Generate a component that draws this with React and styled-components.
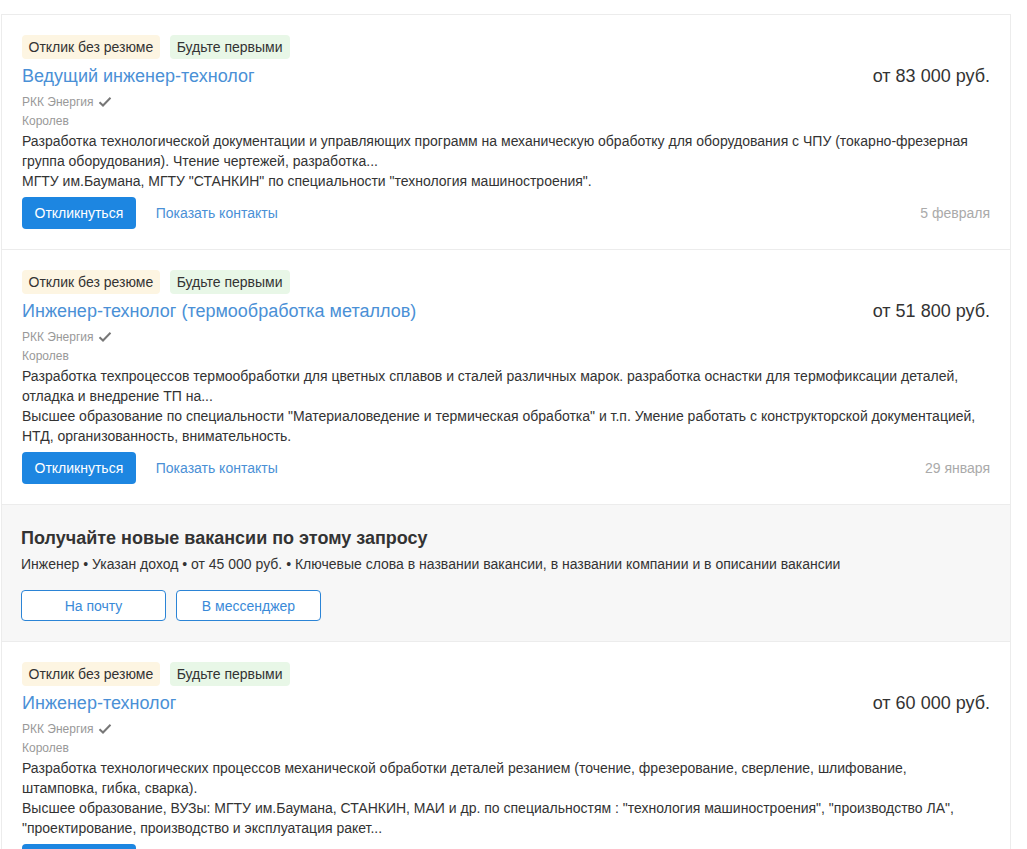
import React from "react";
import styled, { createGlobalStyle } from "styled-components";

const Global = createGlobalStyle`
  html, body { margin: 0; padding: 0; background: #fff; }
  body { font-family: Arial, "Liberation Sans", sans-serif; color: #333; }
  * { box-sizing: border-box; }
`;

const List = styled.div`
  width: 1010px;
  margin: 14px 0 0 1px;
  border: 1px solid #ececec;
  border-bottom: none;
`;

const Card = styled.div`
  padding: 20px 20px 20px 20px;
  border-bottom: 1px solid #ececec;
`;

const Tags = styled.div`
  display: flex;
  gap: 10px;
`;

const Tag = styled.span`
  display: inline-flex;
  align-items: center;
  height: 24px;
  padding: 0 7px 0 6.5px;
  border-radius: 4px;
  font-size: 14px;
  color: #333;
  background: ${(p) => (p.$kind === "green" ? "#e8f7e7" : "#fdf5e2")};
`;

const Head = styled.div`
  display: flex;
  justify-content: space-between;
  align-items: center;
  margin: 6px 0 5px;
  line-height: 22px;
`;

const Title = styled.a`
  font-size: 18px;
  color: #4a90d6;
  text-decoration: none;
`;

const Salary = styled.div`
  font-size: 18px;
  color: #333;
`;

const Meta = styled.div`
  display: flex;
  align-items: center;
  gap: 4px;
  font-size: 12px;
  line-height: ${(p) => (p.$tight ? "19px" : "20px")};
  color: #999;
`;

const Desc = styled.div`
  max-width: 958px;
  font-size: 14px;
  line-height: 20px;
  color: #333;
`;

const Footer = styled.div`
  display: flex;
  align-items: center;
  margin-top: 6px;
`;

const Primary = styled.button`
  height: 32px;
  padding: 0 12.5px;
  border: none;
  border-radius: 4px;
  background: #1d86e1;
  color: #fff;
  font-family: inherit;
  font-size: 14px;
  cursor: pointer;
`;

const LinkBtn = styled.a`
  margin-left: 20px;
  font-size: 14px;
  color: #4a90d6;
  text-decoration: none;
`;

const DateText = styled.span`
  margin-left: auto;
  font-size: 14px;
  color: #aaa;
`;

const Subscribe = styled.div`
  background: #f7f7f7;
  padding: 22px 20px 20px 19px;
  border-bottom: 1px solid #ececec;
`;

const SubTitle = styled.div`
  font-size: 18px;
  font-weight: bold;
  line-height: 22px;
  color: #333;
`;

const SubText = styled.div`
  margin-top: 5px;
  font-size: 14px;
  line-height: 20px;
  color: #333;
`;

const SubButtons = styled.div`
  display: flex;
  gap: 10px;
  margin-top: 16px;
`;

const Outline = styled.button`
  width: 145px;
  height: 31px;
  border: 1px solid #2b84d6;
  border-radius: 4px;
  background: #fff;
  color: #3a8ad8;
  font-family: inherit;
  font-size: 14px;
  cursor: pointer;
`;

const Check = () => (
  <svg width="14" height="12" viewBox="0 0 14 12" aria-hidden="true">
    <path d="M1.5 6.2 L5 9.5 L12.5 1.8" fill="none" stroke="#777" strokeWidth="2" />
  </svg>
);

const vacancies = [
  {
    title: "Ведущий инженер-технолог",
    salary: "от 83 000 руб.",
    desc: [
      "Разработка технологической документации и управляющих программ на механическую обработку для оборудования с ЧПУ (токарно-фрезерная группа оборудования). Чтение чертежей, разработка...",
      "МГТУ им.Баумана, МГТУ \"СТАНКИН\" по специальности \"технология машиностроения\".",
    ],
    date: "5 февраля",
  },
  {
    title: "Инженер-технолог (термообработка металлов)",
    salary: "от 51 800 руб.",
    desc: [
      "Разработка техпроцессов термообработки для цветных сплавов и сталей различных марок. разработка оснастки для термофиксации деталей, отладка и внедрение ТП на...",
      "Высшее образование по специальности \"Материаловедение и термическая обработка\" и т.п. Умение работать с конструкторской документацией, НТД, организованность, внимательность.",
    ],
    date: "29 января",
  },
  {
    title: "Инженер-технолог",
    salary: "от 60 000 руб.",
    desc: [
      "Разработка технологических процессов механической обработки деталей резанием (точение, фрезерование, сверление, шлифование, штамповка, гибка, сварка).",
      "Высшее образование, ВУЗы: МГТУ им.Баумана, СТАНКИН, МАИ и др. по специальностям : \"технология машиностроения\", \"производство ЛА\", \"проектирование, производство и эксплуатация ракет...",
    ],
    date: "22 января",
  },
];

const Vacancy = ({ v }) => (
  <Card>
    <Tags>
      <Tag>Отклик без резюме</Tag>
      <Tag $kind="green">Будьте первыми</Tag>
    </Tags>
    <Head>
      <Title href="#">{v.title}</Title>
      <Salary>{v.salary}</Salary>
    </Head>
    <Meta>
      РКК Энергия <Check />
    </Meta>
    <Meta $tight>Королев</Meta>
    <Desc>
      {v.desc.map((d, i) => (
        <div key={i}>{d}</div>
      ))}
    </Desc>
    <Footer>
      <Primary>Откликнуться</Primary>
      <LinkBtn href="#">Показать контакты</LinkBtn>
      <DateText>{v.date}</DateText>
    </Footer>
  </Card>
);

export default function App() {
  return (
    <>
      <Global />
      <List>
        <Vacancy v={vacancies[0]} />
        <Vacancy v={vacancies[1]} />
        <Subscribe>
          <SubTitle>Получайте новые вакансии по этому запросу</SubTitle>
          <SubText>
            Инженер • Указан доход • от 45 000 руб. • Ключевые слова в названии вакансии, в названии компании и в описании вакансии
          </SubText>
          <SubButtons>
            <Outline>На почту</Outline>
            <Outline>В мессенджер</Outline>
          </SubButtons>
        </Subscribe>
        <Vacancy v={vacancies[2]} />
      </List>
    </>
  );
}
